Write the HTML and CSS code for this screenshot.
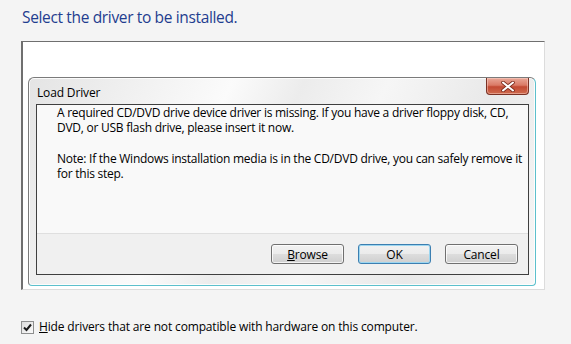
FILE: index.html
```html
<!DOCTYPE html>
<html lang="en">
<head>
  <meta charset="UTF-8">
  <title>Select the driver to be installed</title>
  <link rel="stylesheet" href="styles.css">
</head>
<body>

  <div class="setup-page">
    <h1 class="page-title">Select the driver to be installed.</h1>

    <!-- driver list with the modal dialog on top -->
    <div class="driver-list">
      <div class="dialog">
        <div class="dialog-titlebar">
          <span class="dialog-title">Load Driver</span>
          <button class="close-button" type="button">
            <svg width="14" height="11" viewBox="0 0 14 11">
              <path d="M2 1.5 L12 9.5 M12 1.5 L2 9.5" stroke="#7a2a1c" stroke-width="3.6" stroke-linecap="round"/>
              <path d="M2 1.5 L12 9.5 M12 1.5 L2 9.5" stroke="#ffffff" stroke-width="2" stroke-linecap="round"/>
            </svg>
          </button>
        </div>

        <div class="dialog-body">
          <div class="dialog-message">
            <p>A required CD/DVD drive device driver is missing. If you have a driver floppy disk, CD, DVD, or USB flash drive, please insert it now.</p>
            <p>Note: If the Windows installation media is in the CD/DVD drive, you can safely remove it for this step.</p>
          </div>
          <div class="dialog-buttons">
            <button type="button" class="win-button"><u>B</u>rowse</button>
            <button type="button" class="win-button default">OK</button>
            <button type="button" class="win-button">Cancel</button>
          </div>
        </div>
      </div>
    </div>

    <!-- 호환 드라이버 필터 -->
    <label class="hide-option">
      <span class="checkbox">
        <svg width="9" height="9" viewBox="0 0 9 9">
          <path d="M1 4.5 L3.5 7 L8 1.5" fill="none" stroke="#1a1a1a" stroke-width="2"/>
        </svg>
      </span>
      <span><u>H</u>ide drivers that are not compatible with hardware on this computer.</span>
    </label>
  </div>

</body>
</html>
```

FILE: styles.css
```css
body {
  margin: 0;
  padding: 0;
  background-color: #f4f4f4;
  font-family: 'Open Sans', 'Noto Sans', sans-serif;
  font-size: 12px;
  letter-spacing: -0.15px;
  color: #000;
}

.setup-page {
  width: 524px;
  padding: 7px 0 0 21px;
}

.page-title {
  margin: 0 0 13px 1px;
  font-size: 15.5px;
  font-weight: normal;
  letter-spacing: -0.35px;
  line-height: 21px;
  color: #1f3d8f;
}

/* 드라이버 목록 상자 */
.driver-list {
  height: 249px;
  padding: 35px 8px 0 5px;
  box-sizing: border-box;
  background-color: #fff;
  border: 1px solid #dcdcdc;
  border-left-color: #6f6f6f;
  border-top-color: #6f6f6f;
  border-left-width: 2px;
}

.dialog {
  height: 209px;
  box-sizing: border-box;
  padding: 0 6px 7px 7px;
  border: 1px solid #7b7b7b;
  border-right-color: #5cc0cc;
  border-bottom-color: #5cc0cc;
  border-radius: 6px 6px 4px 4px;
  background: linear-gradient(115deg, #e4e4e4 0%, #f3f3f3 22%, #fbfbfb 34%, #ececec 46%, #f6f6f6 60%, #e9e9e9 78%, #f7f7f7 100%);
  box-shadow: inset 0 0 0 1px rgba(255, 255, 255, 0.8);
}

.dialog-titlebar {
  display: flex;
  justify-content: space-between;
  align-items: flex-start;
  height: 26px;
}

.dialog-title {
  align-self: flex-end;
  padding: 0 0 3px 1px;
  line-height: 16px;
}

.close-button {
  display: flex;
  justify-content: center;
  align-items: center;
  width: 43px;
  height: 17px;
  margin: 0;
  padding: 0;
  border: 1px solid #7a3124;
  border-top: none;
  border-radius: 0 0 4px 4px;
  background: linear-gradient(#e9a797 0%, #da7a66 45%, #c34a33 55%, #cf6b4e 100%);
  box-shadow: inset 0 0 0 1px rgba(255, 220, 210, 0.45);
}

.dialog-body {
  border: 1px solid #3f3f3f;
  background-color: #f0f0f0;
}

.dialog-message {
  height: 128px;
  padding: 0 0 0 20px;
  background-color: #f9f9f9;
  border-bottom: 1px solid #dfdfdf;
  line-height: 15px;
  letter-spacing: -0.25px;
}

.dialog-message p {
  margin: 0 0 16px;
}

.dialog-buttons {
  display: flex;
  justify-content: flex-end;
  gap: 14px;
  padding: 10px 10px 10px 0;
}

.win-button {
  width: 73px;
  height: 20px;
  padding: 0;
  font-family: inherit;
  font-size: 12px;
  letter-spacing: inherit;
  color: #000;
  border: 1px solid #707070;
  border-radius: 3px;
  background: linear-gradient(#f2f2f2 0%, #ebebeb 50%, #dddddd 51%, #cfcfcf 100%);
  box-shadow: inset 0 0 0 1px rgba(255, 255, 255, 0.75);
}

.win-button.default {
  border-color: #3c7fb1;
  box-shadow: inset 0 0 0 1px #9cd6f0;
}

/* 체크박스 */
.hide-option {
  display: flex;
  align-items: center;
  gap: 5px;
  margin-top: 30px;
  line-height: 14px;
}

.checkbox {
  display: flex;
  justify-content: center;
  align-items: center;
  width: 11px;
  height: 11px;
  border: 1px solid #8e8f8f;
  background: linear-gradient(135deg, #dcdcdc, #fbfbfb);
}
```
